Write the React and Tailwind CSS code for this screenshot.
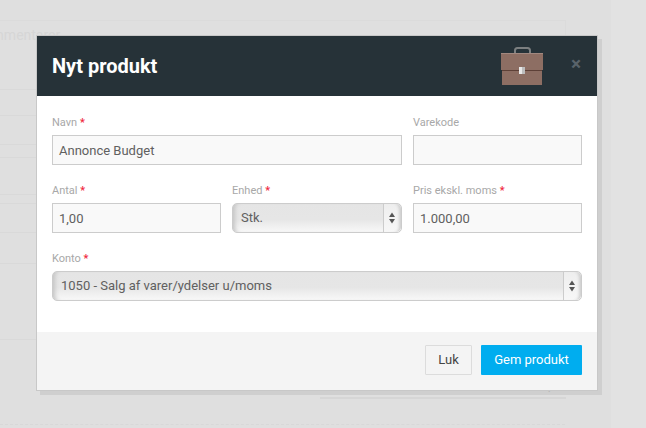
const Req = () => <span className="text-[#f0263c] font-medium"> *</span>;

const Label = ({ children, req }) => (
  <label className="block h-[13px] mb-[6px] text-[11px] leading-[13px] text-[#a8a8a8]">
    {children}
    {req && <Req />}
  </label>
);

const Input = ({ value }) => (
  <div className="h-[30px] w-full border border-[#cccccc] bg-[#f9f9f9] px-[6px] text-[13px] leading-[29px] text-[#606060]">
    {value}
  </div>
);

const Select = ({ value }) => (
  <div className="flex h-[30px] w-full rounded-[5px] border border-[#cccccc] bg-[linear-gradient(#e5e5e5,#e6e6e6_55%,#f8f8f8)] shadow-[inset_5px_0_4px_-3px_#c4c4c4] text-[13px] leading-[27px] text-[#606060]">
    <div className="flex-1 pl-[8px] truncate">{value}</div>
    <div className="flex w-[18px] flex-col items-center justify-center rounded-r-[5px] border-l border-[#cccccc] bg-[linear-gradient(#eeeeee,#f7f7f7)] shadow-[inset_-4px_0_3px_-2px_#cfcfcf]">
      <svg width="6" height="12" viewBox="0 0 6 12" className="-ml-[1px]">
        <path d="M3 0.5 L6 5 H0 Z" fill="#555555" />
        <path d="M0 7 H6 L3 11.5 Z" fill="#555555" />
      </svg>
    </div>
  </div>
);

const Briefcase = () => (
  <svg width="42" height="39" viewBox="0 0 42 39">
    <path d="M14 9 V4.5 Q14 2 16.5 2 H26.5 Q29 2 29 4.5 V9" fill="none" stroke="#7c7f80" strokeWidth="2" />
    <rect x="0" y="7" width="42" height="17" fill="#8d6e63" />
    <rect x="0" y="7" width="42" height="1" fill="#a1887f" />
    <rect x="1" y="24" width="40" height="15" fill="#8d6e63" />
    <rect x="1" y="24" width="40" height="1" fill="#5d4037" />
    <rect x="18" y="21" width="6" height="7" fill="#e8e8e8" />
    <rect x="21" y="21" width="3" height="7" fill="#bdbdbd" />
  </svg>
);

const bgRows = [89, 115, 144, 157, 194, 203, 232, 263, 339];

export default function App() {
  return (
    <div className="relative h-[428px] w-[646px] overflow-hidden bg-[#e2e2e2] font-['Roboto',sans-serif]">
      <div className="h-full w-[611px] bg-[#dfdfdf]">
        {/* page behind the overlay */}
        <div className="relative h-full">
          <div className="absolute left-0 top-[20px] h-[60px] w-[566px] border-t border-r border-[#dbdbdb]" />
          {bgRows.map((y) => (
            <div key={y} className="absolute left-0 w-[565px] border-t border-[#d9d9d9]" style={{ top: y }} />
          ))}
          <div className="absolute left-[-25px] top-[27px] text-[14px] leading-[17px] text-[#d6d6d6]">
            Kommentarer
          </div>
          <div className="absolute left-[325px] top-[378px] text-[13px] leading-[15px] text-[#c4c4c4]">
            Total ekskl. moms
          </div>
          <div className="absolute left-[541px] top-[378px] text-[13px] leading-[15px] text-[#c4c4c4]">
            0,00 kr
          </div>
          <div className="absolute left-[320px] top-[397px] h-[2px] w-[246px] bg-[#d6d6d6]" />
          <div className="absolute left-0 top-[424px] w-[565px] border-t border-dashed border-[#d8d8d8]" />
        </div>
      </div>

      <div className="absolute left-[36px] top-[35px] w-[562px] border border-[#c8c8c8] bg-white shadow-[4px_4px_0_rgba(0,0,0,0.07)]">
        <div className="flex h-[60px] items-center bg-[#263238] pl-[15px]">
          <h4 className="flex-1 text-[20px] font-bold leading-[24px] text-white">Nyt produkt</h4>
          <div className="mb-[1px] mr-[28px]">
            <Briefcase />
          </div>
          <div className="mr-[16px] mb-[6px] text-[19px] font-bold leading-[19px] text-[#59636a]">×</div>
        </div>

        <div className="flex flex-col gap-[19px] px-[15px] pt-[20px] pb-[31px]">
          <div className="flex gap-[11px]">
            <div className="w-[350px]">
              <Label req>Navn</Label>
              <Input value="Annonce Budget" />
            </div>
            <div className="w-[169px]">
              <Label>Varekode</Label>
              <Input value="" />
            </div>
          </div>
          <div className="flex gap-[11px]">
            <div className="w-[169px]">
              <Label req>Antal</Label>
              <Input value="1,00" />
            </div>
            <div className="w-[170px]">
              <Label req>Enhed</Label>
              <Select value="Stk." />
            </div>
            <div className="w-[169px]">
              <Label req>Pris ekskl. moms</Label>
              <Input value="1.000,00" />
            </div>
          </div>
          <div>
            <Label req>Konto</Label>
            <Select value="1050 - Salg af varer/ydelser u/moms" />
          </div>
        </div>

        <div className="flex h-[58px] items-center justify-end gap-[9px] bg-[#f4f4f4] px-[15px] pb-[2px]">
          <button className="h-[30px] w-[47px] rounded-[1px] border border-[#dcdcdc] bg-[#f4f4f4] text-[13px] text-[#444444]">
            Luk
          </button>
          <button className="h-[30px] w-[101px] rounded-[1px] bg-[#00adef] text-[13px] text-white">
            Gem produkt
          </button>
        </div>
      </div>
    </div>
  );
}
